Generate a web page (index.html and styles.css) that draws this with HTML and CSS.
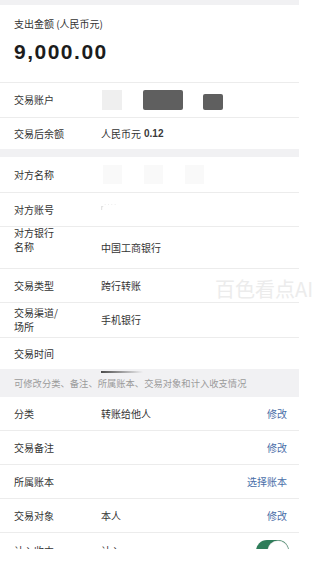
FILE: index.html
```html
<!DOCTYPE html>
<html lang="zh-CN">
<head>
<meta charset="utf-8">
<title>交易详情</title>
<link rel="stylesheet" href="styles.css">
</head>
<body>
<div class="page">
  <div class="sheet">
    <div class="band band-top"></div>
    <div class="header">
      <div class="cap">支出金额 (人民币元)</div>
      <div class="amount">9,000.00</div>
    </div>

    <div class="row r34">
      <div class="label">交易账户</div>
      <div class="value masks">
        <span class="mask m-light"></span>
        <span class="mask m-dark m-wide"></span>
        <span class="mask m-dark m-small"></span>
      </div>
    </div>
    <div class="row r31 nob">
      <div class="label">交易后余额</div>
      <div class="value">人民币元 <b class="num">0.12</b></div>
    </div>

    <div class="band band-mid"></div>

    <div class="row r35">
      <div class="label">对方名称</div>
      <div class="value masks faint">
        <span class="mask m-faint"></span>
        <span class="mask m-faint"></span>
        <span class="mask m-faint"></span>
      </div>
    </div>
    <div class="row r33">
      <div class="label">对方账号</div>
      <div class="value"><span class="ghost">r˙˙˙˙</span></div>
    </div>
    <div class="row r41">
      <div class="label two top">对方银行<br>名称</div>
      <div class="value">中国工商银行</div>
    </div>
    <div class="row r33">
      <div class="label">交易类型</div>
      <div class="value">跨行转账</div>
    </div>
    <div class="row r34">
      <div class="label two">交易渠道/<br>场所</div>
      <div class="value">手机银行</div>
    </div>
    <div class="row r31 nob">
      <div class="label">交易时间</div>
      <div class="value"></div>
    </div>

    <div class="band note">可修改分类、备注、所属账本、交易对象和计入收支情况</div>

    <div class="row r33">
      <div class="label">分类</div>
      <div class="value">转账给他人</div>
      <div class="action">修改</div>
    </div>
    <div class="row r33">
      <div class="label">交易备注</div>
      <div class="value"></div>
      <div class="action">修改</div>
    </div>
    <div class="row r33">
      <div class="label">所属账本</div>
      <div class="value"></div>
      <div class="action">选择账本</div>
    </div>
    <div class="row r33">
      <div class="label">交易对象</div>
      <div class="value">本人</div>
      <div class="action">修改</div>
    </div>
    <div class="row r34 nob">
      <div class="label">计入收支</div>
      <div class="value">计入</div>
      <div class="toggle"><span class="knob"></span></div>
    </div>
  </div>
  <div class="watermark">百色看点AI</div>
</div>
</body>
</html>
```

FILE: styles.css
```css
* { box-sizing: border-box; }

html, body {
  margin: 0;
  padding: 0;
  background: #ffffff;
}

body {
  font-family: "Liberation Sans", "Noto Sans CJK SC", sans-serif;
  color: #333333;
}

.page {
  position: relative;
  width: 321px;
  height: 549px;
  overflow: hidden;
  background: #ffffff;
}

.sheet {
  width: 299px;
  display: flex;
  flex-direction: column;
}

.band {
  background: #f1f1f3;
}

.band-top { height: 5px; }
.band-mid { height: 8px; }

.header {
  padding: 12px 14px 17px 14px;
  border-bottom: 1px solid #ececec;
  display: flex;
  flex-direction: column;
  gap: 8px;
}

.cap {
  font-family: "Noto Sans CJK SC", sans-serif;
  font-size: 10px;
  line-height: 14px;
  color: #333333;
}

.amount {
  font-family: "Liberation Sans", sans-serif;
  font-weight: 700;
  font-size: 21px;
  line-height: 26px;
  letter-spacing: 1.5px;
  color: #1c1c1c;
}

.row {
  display: flex;
  align-items: center;
  padding: 0 12px 0 14px;
  border-bottom: 1px solid #ececec;
  font-family: "Noto Sans CJK SC", sans-serif;
  font-size: 10px;
  line-height: 14px;
  color: #333333;
}

.row.nob { border-bottom: none; }

.r31 { height: 31px; }
.r33 { height: 34px; }
.r34 { height: 35px; }
.r35 { height: 36px; }
.r41 { height: 42px; }

.label {
  width: 87px;
  flex: none;
}

.label.two { line-height: 14px; }

.label.top {
  align-self: flex-start;
  margin-top: -1px;
}

.value {
  flex: 1;
  display: flex;
  align-items: center;
  min-height: 14px;
}

.num {
  font-family: "Liberation Sans", sans-serif;
  font-weight: 700;
  margin-left: 3px;
  color: #3a3a3a;
}

.action {
  margin-left: auto;
  color: #4a6ea8;
  font-size: 10px;
}

/* blurred privacy masks */
.masks {
  align-items: flex-end;
  height: 20px;
}

.mask {
  display: block;
  filter: blur(0.6px);
}

.m-light {
  width: 20px;
  height: 20px;
  margin-left: 1px;
  background: #efefef;
}

.m-dark {
  background: #5f5f5f;
  border-radius: 2px;
}

.m-wide {
  width: 40px;
  height: 20px;
  margin-left: 21px;
}

.m-small {
  width: 20px;
  height: 16px;
  margin-left: 20px;
}

.faint {
  height: 19px;
}

.m-faint {
  width: 19px;
  height: 19px;
  background: #f9f9f9;
  margin-left: 22px;
}

.m-faint:first-child { margin-left: 2px; }

.ghost {
  font-family: "Liberation Sans", sans-serif;
  font-size: 7px;
  color: #cfcfcf;
  letter-spacing: 1px;
  filter: blur(0.4px);
  margin-top: -4px;
}

.note {
  position: relative;
  height: 28px;
  display: flex;
  align-items: center;
  padding-left: 14px;
  font-family: "Noto Sans CJK SC", sans-serif;
  font-size: 9.3px;
  color: #9b9b9b;
}

.note::before {
  content: "";
  position: absolute;
  left: 101px;
  top: 2px;
  width: 42px;
  height: 2px;
  background: linear-gradient(to right, #4a4a4a, rgba(74, 74, 74, 0));
  filter: blur(0.5px);
}

.toggle {
  margin-left: auto;
  margin-right: -2px;
  width: 33px;
  height: 22px;
  border-radius: 11px;
  background: #2f7d5a;
  position: relative;
  flex: none;
}

.knob {
  position: absolute;
  right: 1px;
  top: 1px;
  width: 20px;
  height: 20px;
  border-radius: 50%;
  background: #ffffff;
  box-shadow: 0 0 0 0.5px #d6d6d6;
}

.watermark {
  position: absolute;
  left: 215px;
  top: 276px;
  font-family: "Noto Sans CJK SC", sans-serif;
  font-size: 20px;
  line-height: 26px;
  color: #ececec;
  white-space: nowrap;
  pointer-events: none;
}
```
